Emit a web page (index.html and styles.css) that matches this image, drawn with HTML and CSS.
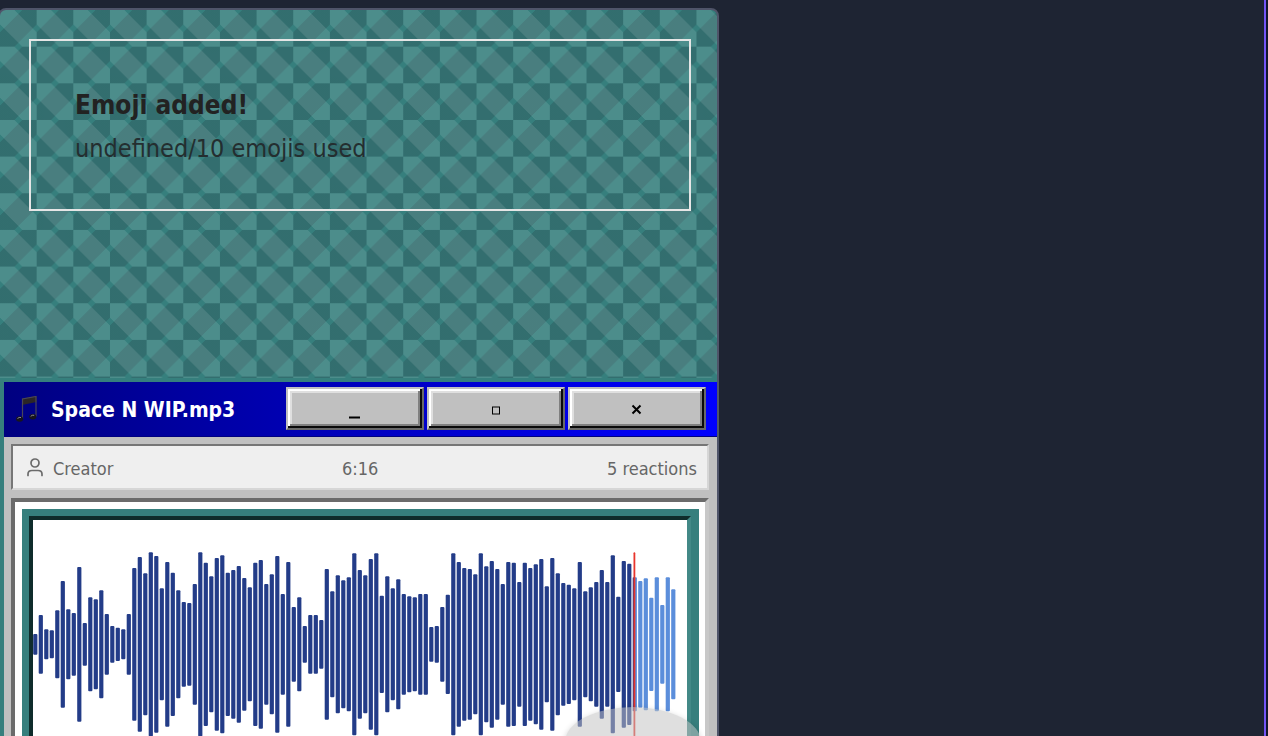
FILE: index.html
```html
<!DOCTYPE html>
<html lang="en">
<head>
<meta charset="utf-8">
<title>Space N WIP.mp3</title>
<link rel="stylesheet" href="styles.css">
</head>
<body>
<main class="page">
  <article class="card">
    <section class="banner">
      <div class="notice" role="status">
        <strong class="notice-title">Emoji added!</strong>
        <p class="notice-text">undefined/10 emojis used</p>
      </div>
    </section>
    <section class="window">
      <header class="titlebar">
        <svg class="note" viewBox="0 0 22 26" aria-hidden="true">
          <path d="M6 2.500 20.500 0V6L6 9Z" fill="#2c2626"/>
          <path d="M6.500 23V3L20 .500V20.500" fill="none" stroke="#4a4658" stroke-width="1.200"/>
          <ellipse cx="3.600" cy="23" rx="3.500" ry="2.700" fill="#17151c"/>
          <ellipse cx="16.800" cy="20.800" rx="3.500" ry="2.700" fill="#17151c"/>
          <path d="M1.500 22.500q1.500-1.500 3.500-1M14.700 20.300q1.500-1.500 3.500-1" fill="none" stroke="#8a8794"/>
        </svg>
        <h1 class="title">Space N WIP.mp3</h1>
        <div class="controls">
          <button class="control" type="button" aria-label="Minimize"><svg viewBox="0 0 12 20" class="glyph"><path d="M0 17.500H11V19.500H0Z"/></svg></button>
          <button class="control" type="button" aria-label="Maximize"><svg viewBox="0 0 12 20" class="glyph"><path fill-rule="evenodd" d="M2 7.500H10V15.500H2ZM3 8.500V14.500H9V8.500Z"/></svg></button>
          <button class="control" type="button" aria-label="Close"><svg viewBox="0 0 12 20" class="glyph"><path d="M1.500 6.500 9.500 14.500M9.500 6.500 1.500 14.500" stroke="#000" stroke-width="2"/></svg></button>
        </div>
      </header>
      <div class="content">
        <div class="info">
          <span class="creator">
            <svg class="person" viewBox="0 0 16 19" fill="none" stroke="#6b6b6b" stroke-width="1.700" stroke-linecap="round" aria-hidden="true"><circle cx="8" cy="4" r="4"/><path d="M1 16.500V15Q1 11.500 5 11.500H11Q15 11.500 15 15V16.500"/></svg>
            Creator
          </span>
          <span class="duration">6:16</span>
          <span class="reactions">5 reactions</span>
        </div>
        <div class="panel">
          <div class="frame">
            <div class="canvas">
              <svg class="wave" viewBox="0 0 654 249" preserveAspectRatio="xMinYMid meet" role="img" aria-label="Waveform"></svg>
            </div>
          </div>
          <button class="bubble" type="button" aria-label="Add reaction"></button>
        </div>
      </div>
    </section>
  </article>
</main>
<script src="wave.js"></script>
</body>
</html>
```
FILE: wave.js
```js
const heights = [
  31, 88, 45, 42, 102, 190, 105, 94, 232, 64, 141, 135, 162, 91, 55, 50, 45, 91, 229, 262,
  213, 276, 265, 168, 247, 215, 162, 127, 124, 181, 276, 245, 204, 259, 267, 215, 223, 235, 199, 171,
  245, 253, 181, 210, 265, 151, 247, 112, 141, 55, 88, 88, 73, 226, 159, 207, 192, 201, 273, 223,
  207, 256, 273, 146, 204, 168, 195, 151, 144, 141, 151, 151, 52, 55, 112, 149, 273, 247, 229, 226,
  210, 273, 234, 250, 226, 181, 247, 245, 187, 245, 229, 240, 256, 174, 259, 213, 184, 179, 168, 247,
  159, 171, 187, 223, 187, 267, 143, 250, 242, 201, 190, 198, 140, 201, 118, 201, 165
];
const NS = "http://www.w3.org/2000/svg";
const wave = document.querySelector(".wave");
const pitch = 5.5;
const barWidth = 4.2;
const middle = 124.3;
const playhead = 601.3;

function bar(x, y, width, height, name) {
  const rect = document.createElementNS(NS, "rect");
  rect.setAttribute("x", x);
  rect.setAttribute("y", y);
  rect.setAttribute("width", width);
  rect.setAttribute("height", height);
  rect.setAttribute("rx", Math.min(1, width / 2));
  rect.setAttribute("class", name);
  wave.append(rect);
}

heights.forEach((value, i) => {
  const x = i * pitch + 0.2;
  const half = value / 3;
  const top = middle - half;
  if (x < playhead && x + barWidth > playhead) {
    bar(x, top, playhead - x, half * 2, "played");
    bar(playhead, top, x + barWidth - playhead, half * 2, "unplayed");
  } else {
    bar(x, top, barWidth, half * 2, x < playhead ? "played" : "unplayed");
  }
});
bar(playhead - 0.8, middle - 92, 1.8, 184, "playhead");
```
FILE: styles.css
```css
* { box-sizing: border-box; }

body {
  margin: 0;
  height: 100vh;
  overflow: hidden;
  background: #12162b;
  font-family: Tahoma, "DejaVu Sans Condensed", "DejaVu Sans", sans-serif;
  font-stretch: condensed;
}

.page {
  height: 100vh;
  margin-right: 2px;
  padding-top: 8px;
  border-right: 2px solid #7455f6;
  background: #1e2433;
  overflow: hidden;
}

.card {
  max-width: 721px;
  margin-left: -2px;
  border: 2px solid #4f5469;
  border-radius: 8px;
  overflow: hidden;
  background: #367f7d;
}

.banner {
  height: 368px;
  padding: 29px 26px 0 29px;
  background-image:
    linear-gradient(45deg, transparent 30%, rgba(255, 255, 255, .11) 30%, rgba(255, 255, 255, .11) 70%, transparent 70%),
    linear-gradient(-45deg, transparent 30%, rgba(40, 55, 65, .24) 30%, rgba(40, 55, 65, .24) 70%, transparent 70%);
  background-size: calc(110px / 3) calc(110px / 3);
}

.notice {
  height: 172px;
  padding: 42px 44px;
  border: 2px solid #e6e6e6;
  color: #222;
  font-size: 25px;
  line-height: 44px;
}

.notice-title { display: block; font-size: 26px; }
.notice-text { margin: 0; color: #242e30; }

.window {
  margin: 4px 0 0 4px;
  background: #c0c0c0;
}

.titlebar {
  display: flex;
  align-items: center;
  padding: 5px 11px 6px 12px;
  border-bottom: 1px solid #000080;
  background: linear-gradient(90deg, #000080, #0000ff);
}

.note { width: 22px; height: 26px; }

.title {
  flex: 1;
  margin: 0 0 0 13px;
  padding-top: 2px;
  color: #fff;
  font-size: 21px;
  line-height: 24px;
}

.controls { display: flex; gap: 3px; }

.control {
  display: flex;
  align-items: center;
  justify-content: center;
  width: 138px;
  height: 43px;
  padding: 0;
  border: 2px solid;
  border-color: #c0c0c0 #696969 #696969 #c0c0c0;
  background: #c0c0c0;
  box-shadow: inset -2px -2px #0a0a0a, inset 2px 2px #fff, inset -4px -4px #808080, inset 4px 4px #dfdfdf;
}

.glyph { width: 12px; height: 20px; }

.content { padding: 7px 8px 8px 7px; }

.info {
  display: flex;
  justify-content: space-between;
  align-items: center;
  height: 46px;
  padding: 2px 10px 0 14px;
  border: 2px solid;
  border-color: #767676 #d6d6d6 #d6d6d6 #767676;
  background: #efefef;
  color: #666;
  font-size: 18px;
}

.creator { display: flex; align-items: center; gap: 10px; }
.person { width: 16px; height: 19px; overflow: visible; }

.panel {
  position: relative;
  margin-top: 8px;
  padding: 7px 6px 7px 7px;
  border: 4px solid;
  border-color: #6b6b6b #c8c8c8 #c8c8c8 #6b6b6b;
  background: #fff;
}

.frame {
  padding: 7px 8px 8px 7px;
  background: #367f7d;
}

.canvas {
  border: 4px solid;
  border-color: #0f2c2b #438987 #438987 #0f2c2b;
  background: #fff;
}

.wave { display: block; width: 100%; height: 249px; }
.played { fill: #233c88; }
.unplayed { fill: #5b8edb; }
.playhead { fill: #e8352c; }

.bubble {
  position: absolute;
  top: 205px;
  right: 4px;
  width: 136px;
  height: 70px;
  border: 0;
  border-radius: 50%;
  background: rgba(194, 194, 194, .52);
  box-shadow: 0 2px 6px rgba(0, 0, 0, .2);
}
```
